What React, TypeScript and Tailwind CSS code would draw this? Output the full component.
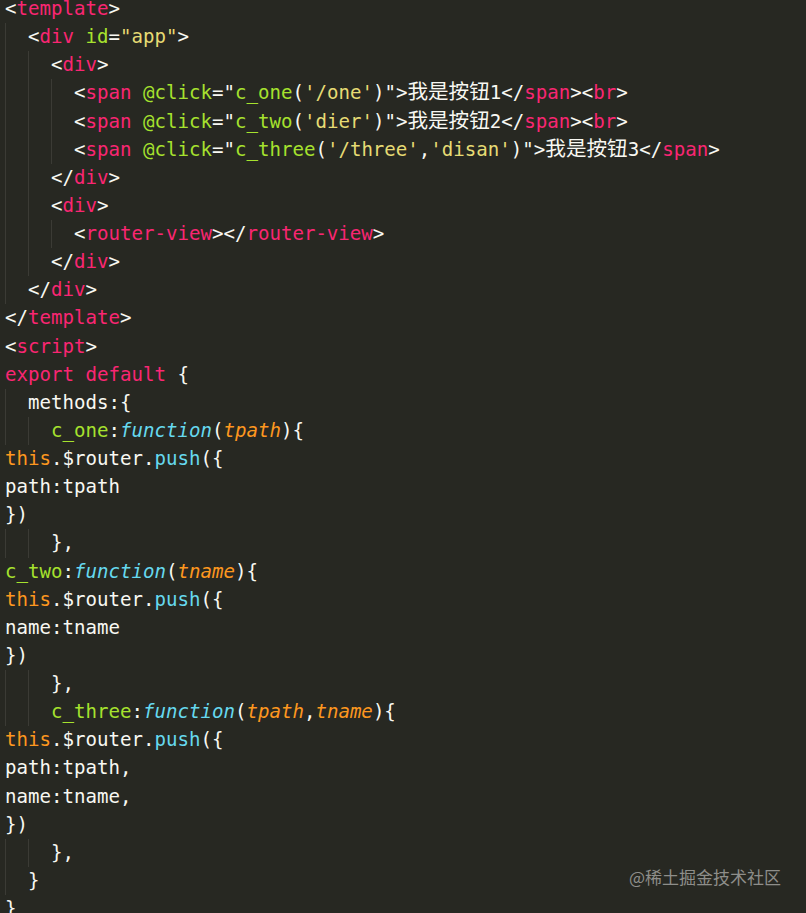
import React from "react";

type Tok = [string, string?];

const W = "text-[#F8F8F2]";
const P = "text-[#F92672]";
const G = "text-[#A6E22E]";
const Y = "text-[#E6DB74]";
const C = "text-[#66D9EF] italic";
const O = "text-[#FD971F] italic";
const OT = "text-[#FD971F]";
const CY = "text-[#66D9EF]";
const CJK = "cjk";

const lines: { indent: number; toks: Tok[] }[] = [
  { indent: 0, toks: [["<", W], ["template", P], [">", W]] },
  { indent: 1, toks: [["<", W], ["div", P], [" "], ["id", G], ["=", W], ['"app"', Y], [">", W]] },
  { indent: 2, toks: [["<", W], ["div", P], [">", W]] },
  {
    indent: 3,
    toks: [["<", W], ["span", P], [" "], ["@click", G], ["=\"", W], ["c_one", G], ["(", W], ["'/one'", Y], [")\">", W], ["我是按钮", CJK], ["1</", W], ["span", P], ["><", W], ["br", P], [">", W]],
  },
  {
    indent: 3,
    toks: [["<", W], ["span", P], [" "], ["@click", G], ["=\"", W], ["c_two", G], ["(", W], ["'dier'", Y], [")\">", W], ["我是按钮", CJK], ["2</", W], ["span", P], ["><", W], ["br", P], [">", W]],
  },
  {
    indent: 3,
    toks: [["<", W], ["span", P], [" "], ["@click", G], ["=\"", W], ["c_three", G], ["(", W], ["'/three'", Y], [",", W], ["'disan'", Y], [")\">", W], ["我是按钮", CJK], ["3</", W], ["span", P], [">", W]],
  },
  { indent: 2, toks: [["</", W], ["div", P], [">", W]] },
  { indent: 2, toks: [["<", W], ["div", P], [">", W]] },
  { indent: 3, toks: [["<", W], ["router-view", P], ["></", W], ["router-view", P], [">", W]] },
  { indent: 2, toks: [["</", W], ["div", P], [">", W]] },
  { indent: 1, toks: [["</", W], ["div", P], [">", W]] },
  { indent: 0, toks: [["</", W], ["template", P], [">", W]] },
  { indent: 0, toks: [["<", W], ["script", P], [">", W]] },
  { indent: 0, toks: [["export", P], [" "], ["default", P], [" {", W]] },
  { indent: 1, toks: [["methods:{", W]] },
  { indent: 2, toks: [["c_one", G], [":", W], ["function", C], ["(", W], ["tpath", O], ["){", W]] },
  { indent: 0, toks: [["this", OT], [".$router.", W], ["push", CY], ["({", W]] },
  { indent: 0, toks: [["path:tpath", W]] },
  { indent: 0, toks: [["})", W]] },
  { indent: 2, toks: [["},", W]] },
  { indent: 0, toks: [["c_two", G], [":", W], ["function", C], ["(", W], ["tname", O], ["){", W]] },
  { indent: 0, toks: [["this", OT], [".$router.", W], ["push", CY], ["({", W]] },
  { indent: 0, toks: [["name:tname", W]] },
  { indent: 0, toks: [["})", W]] },
  { indent: 2, toks: [["},", W]] },
  { indent: 2, toks: [["c_three", G], [":", W], ["function", C], ["(", W], ["tpath", O], [",", W], ["tname", O], ["){", W]] },
  { indent: 0, toks: [["this", OT], [".$router.", W], ["push", CY], ["({", W]] },
  { indent: 0, toks: [["path:tpath,", W]] },
  { indent: 0, toks: [["name:tname,", W]] },
  { indent: 0, toks: [["})", W]] },
  { indent: 2, toks: [["},", W]] },
  { indent: 1, toks: [["}", W]] },
  { indent: 0, toks: [["}", W]] },
];

export default function App() {
  return (
    <div className="relative w-[806px] h-[913px] overflow-hidden bg-[#272822]">
      <div
        className="mt-[-5px] pl-[5px] text-[19.1px] text-[#F8F8F2]"
        style={{ fontFamily: '"DejaVu Sans Mono", "Noto Sans CJK SC", monospace' }}
      >
        {lines.map((ln, i) => (
          <div key={i} className="flex h-[28.13px] leading-[28.13px] whitespace-pre overflow-visible">
            {Array.from({ length: ln.indent }).map((_, k) => (
              <div key={k} className="w-[2ch] shrink-0 self-stretch border-l border-[#3b3b35]" />
            ))}
            <span className="h-[28.13px]">
              {ln.toks.map(([t, c], j) =>
                c === CJK ? (
                  <span
                    key={j}
                    className="text-[20.6px] leading-none text-[#F8F8F2]"
                    style={{ fontFamily: '"Noto Sans CJK SC", sans-serif' }}
                  >
                    {t}
                  </span>
                ) : (
                  <span key={j} className={c ?? W}>
                    {t}
                  </span>
                )
              )}
            </span>
          </div>
        ))}
      </div>
      <div
        className="absolute left-[629px] top-[865px] text-[17px] leading-[24px] text-[#8e8e8a] whitespace-nowrap"
        style={{ fontFamily: '"Noto Sans CJK SC", sans-serif' }}
      >
        @稀土掘金技术社区
      </div>
    </div>
  );
}
